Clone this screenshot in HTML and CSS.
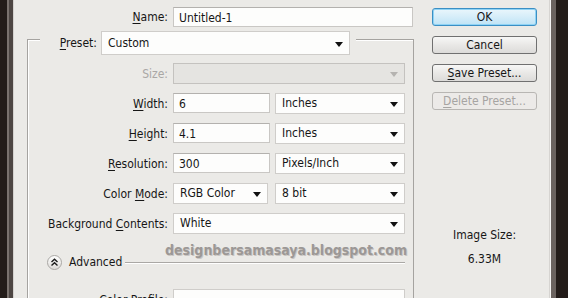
FILE: index.html
```html
<!DOCTYPE html>
<html lang="en">
  <head>
    <meta charset="UTF-8" />
    <meta name="viewport" content="width=device-width, initial-scale=1.0" />
    <title>New</title>
    <link rel="stylesheet" href="styles.css">
  </head>
  <body>
    <div class="screen">
      <div class="edgeLeft"></div>
      <div class="dialog">
        <!-- form column -->
        <div class="form">
          <div class="nameRow">
            <span class="label nameLabel"><u>N</u>ame:</span>
            <div class="field nameField">Untitled-1</div>
          </div>
          <div class="group">
            <div class="presetRow">
              <span class="label"><u>P</u>reset:</span>
              <div class="select presetSelect">Custom<span class="arrow"></span></div>
            </div>
            <div class="rows">
              <span class="label disabled">Size:</span>
              <div class="select disabledSelect wide"><span class="arrow"></span></div>

              <span class="label"><u>W</u>idth:</span>
              <div class="field">6</div>
              <div class="select">Inches<span class="arrow"></span></div>

              <span class="label"><u>H</u>eight:</span>
              <div class="field">4.1</div>
              <div class="select">Inches<span class="arrow"></span></div>

              <span class="label"><u>R</u>esolution:</span>
              <div class="field">300</div>
              <div class="select">Pixels/Inch<span class="arrow"></span></div>

              <span class="label">Color <u>M</u>ode:</span>
              <div class="select narrow">RGB Color<span class="arrow"></span></div>
              <div class="select">8 bit<span class="arrow"></span></div>

              <span class="label">Background <u>C</u>ontents:</span>
              <div class="select wide">White<span class="arrow"></span></div>
            </div>
            <div class="advanced">
              <svg class="advIcon" width="15" height="15" viewBox="0 0 15 15">
                <defs>
                  <linearGradient id="advFill" x1="0" y1="0" x2="0" y2="1">
                    <stop offset="0" stop-color="#ffffff" />
                    <stop offset="1" stop-color="#dddbd8" />
                  </linearGradient>
                </defs>
                <circle cx="7.5" cy="7.5" r="7" fill="url(#advFill)" stroke="#a9a7a4" />
                <path d="M4.5 7 L7.5 4.2 L10.5 7 M4.5 10.6 L7.5 7.8 L10.5 10.6" fill="none" stroke="#1c1c1c" stroke-width="1.4" />
              </svg>
              <span class="advText">Advanced</span>
              <div class="advLine"></div>
            </div>
            <div class="rows profileRow">
              <span class="label">Color Profile:</span>
              <div class="select wide"><span class="arrow"></span></div>
            </div>
          </div>
        </div>
        <!-- buttons column -->
        <div class="side">
          <div class="button ok">OK</div>
          <div class="button">Cancel</div>
          <div class="button"><u>S</u>ave Preset...</div>
          <div class="button off"><u>D</u>elete Preset...</div>
          <div class="imageSize">
            <div>Image Size:</div>
            <div>6.33M</div>
          </div>
        </div>
        <div class="watermark">designbersamasaya.blogspot.com</div>
      </div>
      <div class="edgeRight"></div>
    </div>
  </body>
</html>
```

FILE: styles.css
```css
body {
  margin: 0;
  padding: 0;
  background: #231c19;
  font-family: "DejaVu Sans Condensed", "DejaVu Sans", sans-serif;
  font-stretch: condensed;
  font-size: 12px;
  color: #161616;
}

u {
  text-decoration: underline;
  text-underline-offset: 2px;
}

.screen {
  display: flex;
  height: 298px;
  overflow: hidden;
}

.edgeLeft {
  width: 14px;
  flex-shrink: 0;
  background: linear-gradient(to right, #231c19 0 7px, #7a726e 7px 9px, #4d4643 9px 13px, #d4d2cf 13px 14px);
}

.edgeRight {
  width: 19px;
  flex-shrink: 0;
  background: linear-gradient(to right, #d6d4d1 0 1px, #f5f4f2 1px 2px, #6b635f 2px 7px, #231c19 7px);
}

.dialog {
  flex: 1;
  position: relative;
  display: flex;
  gap: 19px;
  padding-top: 7px;
  background: #ebeae7;
}

/* ===== form column ===== */
.form {
  width: 399px;
  flex-shrink: 0;
}

.label {
  text-align: right;
  white-space: nowrap;
  align-self: center;
}

.disabled {
  color: #a9a7a5;
}

.nameRow {
  display: flex;
  align-items: center;
  gap: 5px;
}

.nameLabel {
  width: 154px;
}

.field {
  height: 20px;
  line-height: 20px;
  box-sizing: border-box;
  padding-left: 5px;
  background: #fdfdfc;
  border: 1px solid #c9c7c4;
  border-top-color: #b3b1ae;
  white-space: nowrap;
}

.nameField {
  width: 240px;
}

.select {
  position: relative;
  height: 21px;
  line-height: 19px;
  box-sizing: border-box;
  padding-left: 6px;
  background: #fdfdfc;
  border: 1px solid #cfcdca;
  white-space: nowrap;
}

.arrow {
  position: absolute;
  right: 6px;
  top: 8px;
  width: 0;
  height: 0;
  border-left: 4px solid transparent;
  border-right: 4px solid transparent;
  border-top: 5px solid #111;
}

.disabledSelect {
  background: #e5e4e1;
  border-color: #c4c2bf;
}

.disabledSelect .arrow {
  border-top-color: #b5b3b0;
}

.group {
  margin: 12px 0 0 13px;
  width: 387px;
  height: 400px;
  box-sizing: border-box;
  border: 1px solid #a5a3a0;
  box-shadow: inset 1px 1px 0 #ffffff;
}

.presetRow {
  display: flex;
  align-items: center;
  gap: 4px;
  width: fit-content;
  margin: -9px 0 0 12px;
  padding: 0 6px 0 17px;
  background: #ebeae7;
}

.presetRow .label {
  width: 40px;
}

.presetSelect {
  width: 249px;
  height: 24px;
  line-height: 22px;
  padding-left: 6px;
}

.presetSelect .arrow {
  top: 10px;
}

.rows {
  display: grid;
  grid-template-columns: 140px 97px 130px;
  column-gap: 5px;
  row-gap: 9px;
  margin-top: 8px;
}

.wide {
  grid-column: span 2;
}

.narrow {
  width: 95px;
}

.advanced {
  display: flex;
  align-items: center;
  height: 16px;
  margin: 20px 8px 0 19px;
}

.advIcon {
  flex-shrink: 0;
}

.advText {
  margin-left: 7px;
}

.advLine {
  flex: 1;
  margin-left: 3px;
  height: 1px;
  background: #aaa8a5;
  box-shadow: 0 1px 0 #ffffff;
}

.profileRow {
  margin-top: 19px;
}

/* ===== buttons column ===== */
.side {
  width: 105px;
  flex-shrink: 0;
  display: flex;
  flex-direction: column;
  gap: 10px;
  padding-top: 1px;
}

.button {
  height: 18px;
  line-height: 16px;
  box-sizing: border-box;
  text-align: center;
  border: 1px solid #707070;
  border-radius: 3px;
  background: linear-gradient(#f7f7f6, #e9e8e6 50%, #dcdbd9);
}

.ok {
  border-color: #3b8fc4;
  background: linear-gradient(#eaf6fc, #d5edf9 50%, #bfe3f5);
  box-shadow: inset 0 0 0 1px #8fd3f5;
}

.off {
  color: #a6a4a2;
  border-color: #b8b6b3;
  background: #eceae8;
}

.imageSize {
  margin-top: 103px;
  text-align: center;
  line-height: 24px;
}

.watermark {
  position: absolute;
  left: 151px;
  top: 242px;
  font-family: "DejaVu Sans Condensed", "DejaVu Sans", sans-serif;
  font-weight: bold;
  font-size: 14px;
  letter-spacing: 0;
  color: #9c9896;
  text-shadow: 1px 1px 0 #c9c6c3;
}
```
